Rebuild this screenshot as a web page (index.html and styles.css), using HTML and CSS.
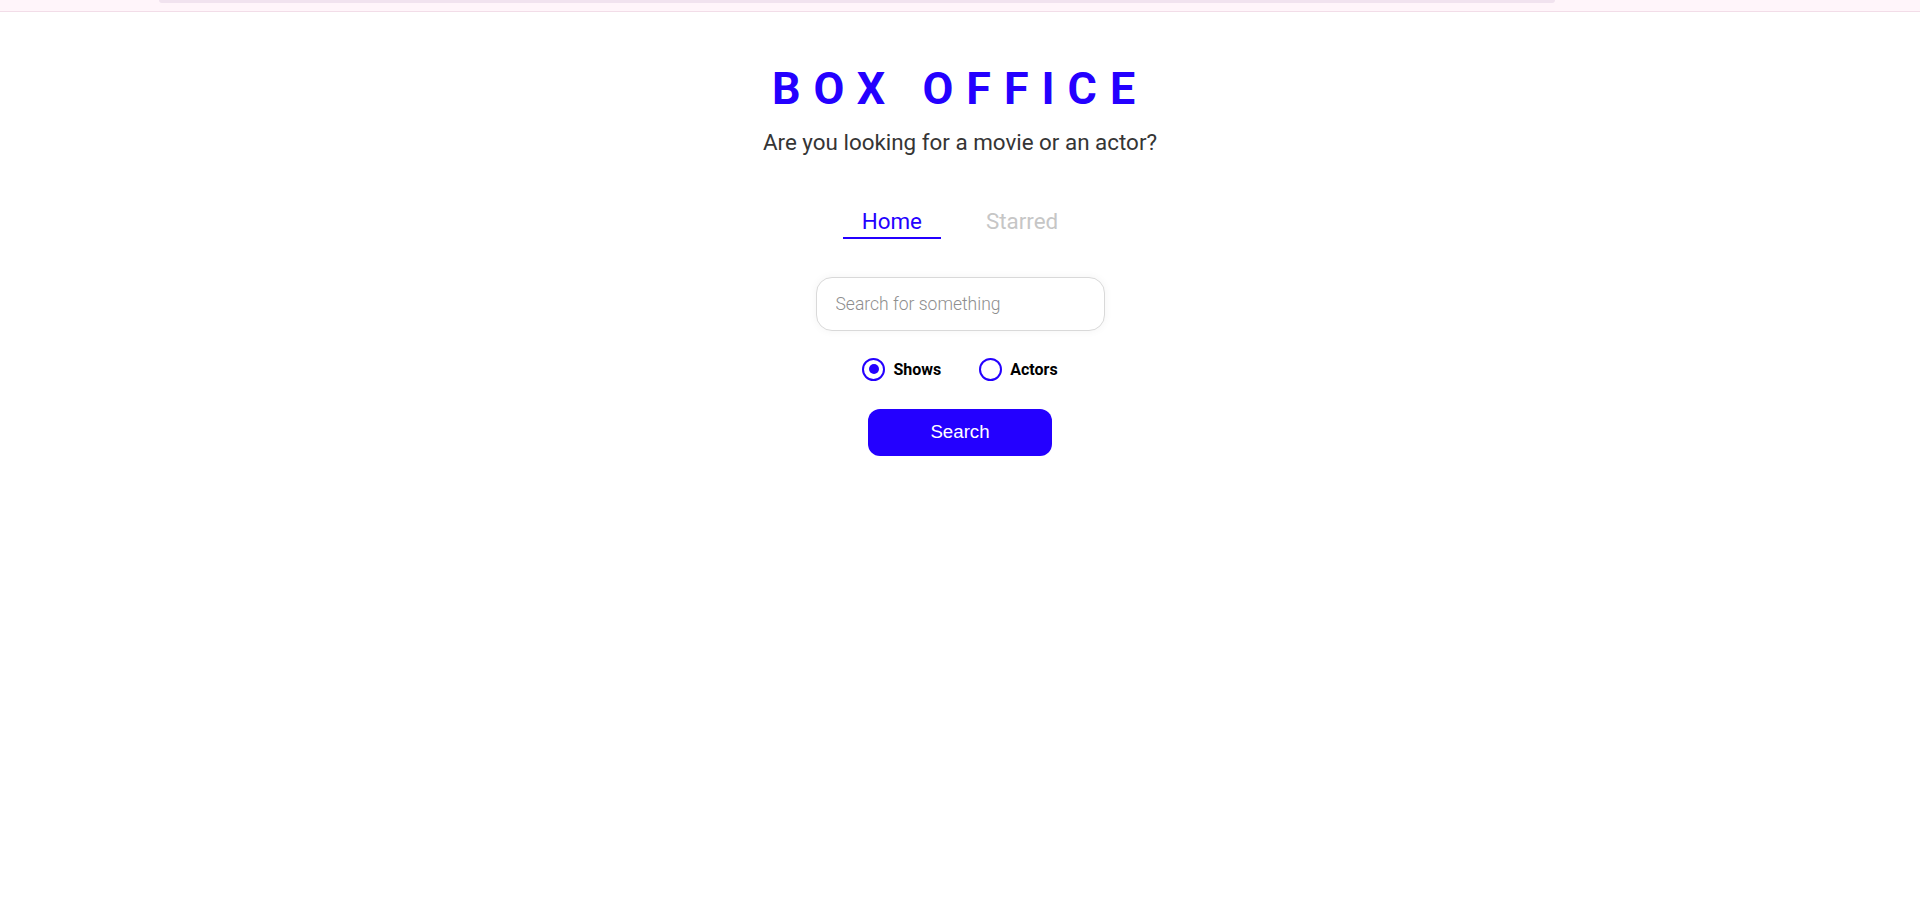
FILE: index.html
```html
<!DOCTYPE html>
<html lang="en">
<head>
<meta charset="utf-8">
<title>Box Office</title>
<link rel="stylesheet" href="styles.css">
</head>
<body>
<div class="topbar"><div class="topbar-track"></div></div>
<main class="page">
  <header class="title">
    <h1 class="title-main">BOX OFFICE</h1>
    <p class="title-sub">Are you looking for a movie or an actor?</p>
  </header>
  <nav class="nav">
    <a class="nav-link active" href="#">Home</a>
    <a class="nav-link" href="#">Starred</a>
  </nav>
  <input class="search-input" type="text" placeholder="Search for something">
  <div class="radios">
    <label class="radio"><input type="radio" name="kind" checked><span>Shows</span></label>
    <label class="radio"><input type="radio" name="kind"><span>Actors</span></label>
  </div>
  <button class="search-btn" type="button">Search</button>
</main>
</body>
</html>
```
FILE: styles.css
```css
html, body {
  margin: 0;
  padding: 0;
  background: #ffffff;
}
body {
  font-family: Roboto, "Liberation Sans", sans-serif;
}
.topbar {
  height: 11px;
  background: #fff5fa;
  border-bottom: 1px solid #f2dde8;
  padding-left: 159px;
}
.topbar-track {
  width: 1396px;
  height: 3px;
  background: #f1e3ef;
  border-radius: 0 0 3px 3px;
}
.page {
  display: flex;
  flex-direction: column;
  align-items: center;
  padding-top: 55px;
}
.title {
  text-align: center;
}
.title-main {
  margin: 0;
  font-size: 44.8px;
  line-height: 1;
  font-weight: 700;
  letter-spacing: 13px;
  color: #2400ff;
}
.title-sub {
  margin: 19px 0 0;
  font-size: 22.4px;
  line-height: 1;
  color: #353535;
}
.nav {
  display: flex;
  gap: 26px;
  margin-top: 57px;
}
.nav-link {
  font-size: 22.4px;
  line-height: 1;
  padding: 0 19px 4px;
  border-bottom: 2px solid transparent;
  color: #c6c6c6;
  text-decoration: none;
}
.nav-link.active {
  color: #2400ff;
  border-bottom-color: #2400ff;
}
.search-input {
  box-sizing: border-box;
  width: 289px;
  height: 54px;
  margin-top: 38px;
  padding: 0 19px;
  border: 1px solid #d9d9d9;
  border-radius: 16px;
  box-shadow: 0 0 8px rgba(0, 0, 0, 0.05);
  font-family: Roboto, sans-serif;
  font-weight: 300;
  font-size: 17.5px;
  color: #353535;
  outline: none;
}
.search-input::placeholder {
  color: #8e8e8e;
}
.radios {
  display: flex;
  gap: 38px;
  margin-top: 27px;
}
.radio {
  display: flex;
  align-items: center;
  gap: 8px;
  font-weight: 700;
  font-size: 16px;
  color: #000000;
}
.radio input {
  appearance: none;
  -webkit-appearance: none;
  box-sizing: border-box;
  width: 23px;
  height: 23px;
  margin: 0;
  border: 2.5px solid #2400ff;
  border-radius: 50%;
  display: flex;
  align-items: center;
  justify-content: center;
}
.radio input:checked::after {
  content: "";
  width: 10px;
  height: 10px;
  border-radius: 50%;
  background: #2400ff;
}
.search-btn {
  margin-top: 28px;
  width: 184px;
  height: 47px;
  border: none;
  border-radius: 12px;
  background: #2400ff;
  color: #ffffff;
  font-family: "Liberation Sans", Arial, sans-serif;
  font-size: 18.7px;
  cursor: pointer;
}
```
